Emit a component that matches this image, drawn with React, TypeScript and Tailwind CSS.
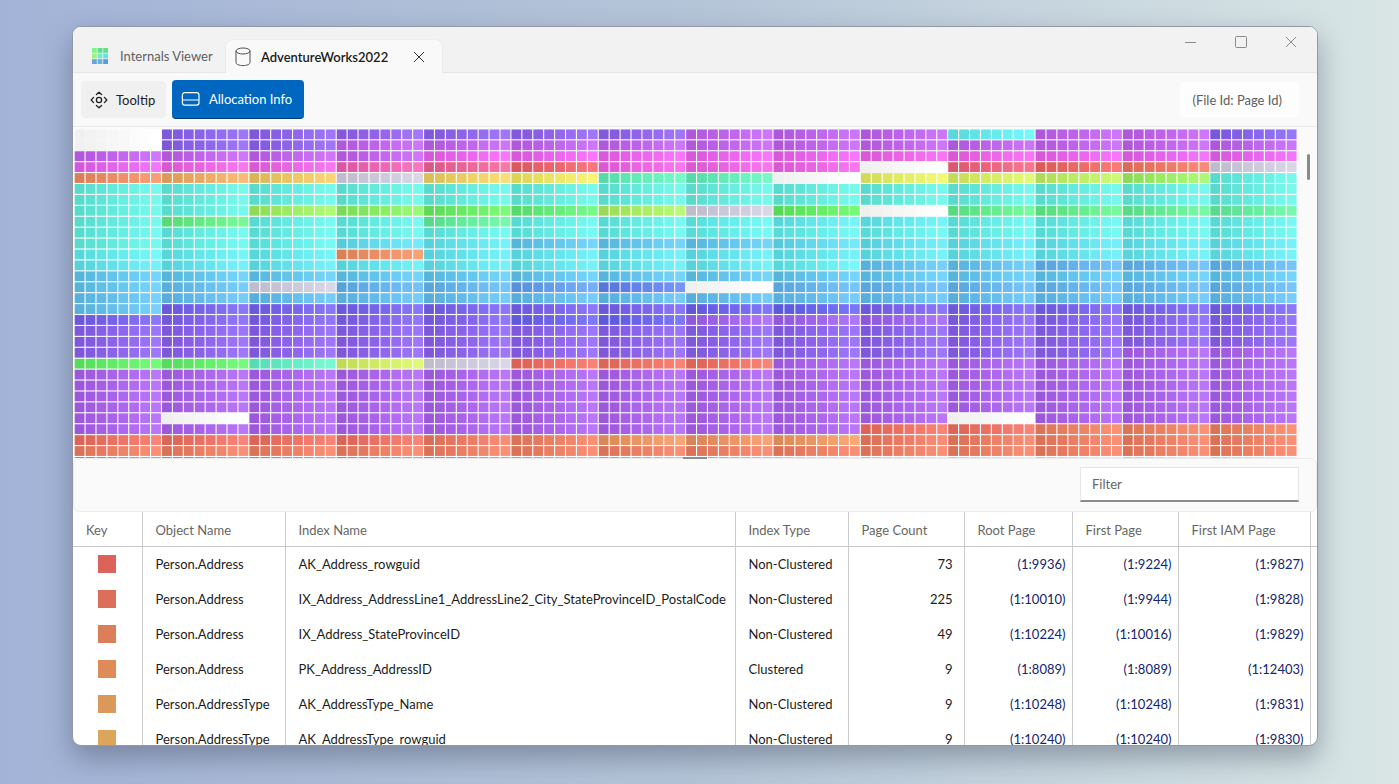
import React from 'react';

// Hue of each extent, or one of the two special fills
const W = -1; // unallocated
const G = -2; // system pages

const fill = (value: number, count = 14): number[] => Array(count).fill(value);

const EXTENTS: number[][] = [
  [W, 257, 258, 261, 259, 260, 260, 280, 279, 279, 181, 280, 280, 255],
  [W, 258, 259, 280, 280, 280, 280, 280, 280, 280, 279, 280, 280, 279],
  [281, 281, 281, 281, 299, 299, 300, 299, 299, 303, 303, 299, 297, 297],
  [297, 305, 304, 326, 338, 356, 304, 304, 303, W, 349, 2, 9, G],
  [18, 31, 43, G, 47, 57, 157, 157, W, 64, 70, 80, 95, 174],
  fill(174),
  fill(174),
  [174, 174, 94, 104, 117, 129, 89, G, 120, W, 139, 138, 142, 146],
  [174, 134, 176, 176, 145, 177, 177, 180, 182, 182, 177, 177, 177, 177],
  [175, 176, 176, 176, 177, 177, 177, 178, 178, 178, 177, 177, 177, 177],
  [174, 176, 178, 187, 184, 197, 197, 197, 188, 186, 185, 185, 184, 184],
  [181, 182, 182, 19, 184, 184, 184, 184, 184, 184, 184, 184, 183, 183],
  [184, 184, 184, 184, 184, 184, 184, 184, 181, 199, 199, 205, 204, 204],
  fill(197),
  [197, 200, G, 206, 204, 214, 226, W, 204, 204, 204, 204, 204, 204],
  [199, ...fill(201, 13)],
  [199, 249, 249, 249, 250, 250, 249, 244, 242, 250, 250, 250, 250, 250],
  [249, 253, 253, 253, 253, 244, 243, 267, 266, 264, 255, 254, 254, 254],
  fill(257),
  fill(258),
  [...fill(258, 12), 271, 271],
  [122, 123, 162, 72, G, 5, 6, 6, ...fill(271, 6)],
  fill(271),
  fill(271),
  fill(271),
  fill(271),
  [271, W, ...fill(271, 8), W, ...fill(271, 3)],
  [...fill(271, 9), 6, 6, 13, 13, 13],
  [6, 6, 6, 6, 10, 12, 22, 20, 23, 10, 11, 12, 12, 12],
  fill(12),
  [12, 12, 12, 12, 14, 30, 30, 30, 55, 55, 62, 62, 62, 62],
];

const PAGES = [0, 1, 2, 3, 4, 5, 6, 7];

// Pages get lighter from left to right inside an extent
const pageColour = (hue: number, page: number) => {
  const t = page / 7;
  if (hue === W) return `hsl(0 0% ${94 + 6 * t}%)`;
  if (hue === G) return `hsl(250 ${14 + 10 * t}% ${77 + 10 * t}%)`;
  return `hsl(${hue} ${64 + 28 * t}% ${60 + 12 * t}%)`;
};

const AllocationMap: React.FC = () => (
  <svg viewBox="0 0 112 30.1" className="block w-full" role="img" aria-label="Allocation map">
    <rect width="112" height="30.1" fill="#fff" />
    {EXTENTS.map((row, y) =>
      row.map((hue, x) =>
        PAGES.map((page) => (
          <rect
            key={`${y}-${x}-${page}`}
            x={x * 8 + page + 0.06}
            y={y + 0.04}
            width={hue === W ? 1 : 0.9}
            height={hue === W ? 1 : 0.9}
            fill={pageColour(hue, page)}
          />
        )),
      ),
    )}
  </svg>
);

interface IndexRow {
  colour: string;
  object: string;
  index: string;
  type: string;
  pages: number;
  root: string;
  first: string;
  iam: string;
}

const ROWS: IndexRow[] = [
  { colour: '#dd6259', object: 'Person.Address', index: 'AK_Address_rowguid', type: 'Non-Clustered', pages: 73, root: '(1:9936)', first: '(1:9224)', iam: '(1:9827)' },
  { colour: '#dc6f5a', object: 'Person.Address', index: 'IX_Address_AddressLine1_AddressLine2_City_StateProvinceID_PostalCode', type: 'Non-Clustered', pages: 225, root: '(1:10010)', first: '(1:9944)', iam: '(1:9828)' },
  { colour: '#dd7e5b', object: 'Person.Address', index: 'IX_Address_StateProvinceID', type: 'Non-Clustered', pages: 49, root: '(1:10224)', first: '(1:10016)', iam: '(1:9829)' },
  { colour: '#dc8b59', object: 'Person.Address', index: 'PK_Address_AddressID', type: 'Clustered', pages: 9, root: '(1:8089)', first: '(1:8089)', iam: '(1:12403)' },
  { colour: '#db985b', object: 'Person.AddressType', index: 'AK_AddressType_Name', type: 'Non-Clustered', pages: 9, root: '(1:10248)', first: '(1:10248)', iam: '(1:9831)' },
  { colour: '#dba659', object: 'Person.AddressType', index: 'AK_AddressType_rowguid', type: 'Non-Clustered', pages: 9, root: '(1:10240)', first: '(1:10240)', iam: '(1:9830)' },
];

const COLUMNS = ['Key', 'Object Name', 'Index Name', 'Index Type', 'Page Count', 'Root Page', 'First Page', 'First IAM Page'];

const LOGO = ['#7df58c', '#5fdc8c', '#5fe08c', '#a0f27a', '#6fe8d8', '#66e2e0', '#62a8dc', '#62b4e2', '#5c9cd6'];

const LogoIcon = () => (
  <svg width="16" height="16" viewBox="0 0 16 16" aria-hidden="true">
    {LOGO.map((colour, i) => (
      <rect key={i} x={(i % 3) * 5.6} y={Math.floor(i / 3) * 5.6} width="4.8" height="4.8" fill={colour} />
    ))}
  </svg>
);

const DatabaseIcon = () => (
  <svg width="16" height="20" viewBox="0 0 16 20" fill="none" stroke="#505050" aria-hidden="true">
    <ellipse cx="8" cy="4" rx="7" ry="3" />
    <path d="M1 4v11.6c0 1.6 3.1 3 7 3s7-1.4 7-3V4" />
  </svg>
);

const TooltipIcon = () => (
  <svg width="18" height="18" viewBox="0 0 18 18" fill="none" stroke="#202020" strokeWidth="1.3" strokeLinecap="round" strokeLinejoin="round" aria-hidden="true">
    <circle cx="9" cy="9" r="2.6" />
    <path d="M6.4 3.6 9 1.2l2.6 2.4M6.4 14.4 9 16.8l2.6-2.4M3.6 6.4 1.2 9l2.4 2.6M14.4 6.4 16.8 9l-2.4 2.6" />
  </svg>
);

const PanelIcon = () => (
  <svg width="20" height="16" viewBox="0 0 20 16" fill="none" stroke="#fff" strokeWidth="1.2" aria-hidden="true">
    <rect x="1.4" y="1.6" width="16.6" height="12.6" rx="2.4" />
    <path d="M1.4 9h16.6" />
  </svg>
);

const CrossIcon = ({ className }: { className: string }) => (
  <svg width="12" height="12" viewBox="0 0 12 12" fill="none" stroke="currentColor" className={className} aria-hidden="true">
    <path d="M1 1l10 10M11 1 1 11" />
  </svg>
);

const TitleBar: React.FC = () => (
  <header className="flex h-[46px] shrink-0 justify-between border-b border-[#e6e6e6] bg-[#f2f2f2]">
    <div className="flex items-end" role="tablist">
      <button role="tab" aria-selected="false" className="flex h-[33px] w-[152px] items-center gap-3 pl-[19px] text-[#5f5f5f]">
        <LogoIcon />
        Internals Viewer
      </button>
      {/* Active tab covers the bar's bottom border */}
      <div className="-mb-px flex h-[34px] w-[218px] items-center justify-between rounded-t-lg border border-b-0 border-[#ececec] bg-[#f9f9f9] pr-[17px] pl-[9px]">
        <button role="tab" aria-selected="true" className="flex items-center gap-[10px] font-semibold text-[#1a1a1a]">
          <DatabaseIcon />
          AdventureWorks2022
        </button>
        <button aria-label="Close tab" className="text-[#303030]">
          <CrossIcon className="block" />
        </button>
      </div>
    </div>
    <div className="flex h-[30px] items-center gap-[38px] pr-5 text-[#8a8a8a]">
      <button aria-label="Minimize">
        <svg width="12" height="12" viewBox="0 0 12 12" stroke="currentColor" className="block">
          <path d="M0 6.5h11" />
        </svg>
      </button>
      <button aria-label="Maximize">
        <svg width="12" height="12" viewBox="0 0 12 12" fill="none" stroke="currentColor" className="block">
          <rect x="0.5" y="0.5" width="11" height="11" rx="1" />
        </svg>
      </button>
      <button aria-label="Close">
        <CrossIcon className="block" />
      </button>
    </div>
  </header>
);

const Toolbar: React.FC = () => (
  <div className="flex h-[54px] shrink-0 items-center justify-between border-b border-[#ebebeb] bg-[#f9f9f9] pr-[18px] pl-2">
    <div className="flex items-center gap-[6px]">
      <button className="flex h-[37px] w-[85px] items-center gap-2 rounded bg-[#f0f0f0] pl-[9px] text-[#202020]">
        <TooltipIcon />
        Tooltip
      </button>
      <button className="flex h-[39px] w-[132px] items-center gap-2 rounded border-b border-[#003e73] bg-[#0067c0] pl-[9px] whitespace-nowrap text-white">
        <PanelIcon />
        Allocation Info
      </button>
    </div>
    <button className="h-[35px] rounded bg-[#fdfdfd] pr-[17px] pl-3 text-[#606060]">(File Id: Page Id)</button>
  </div>
);

const IndexTable: React.FC = () => (
  <table className="w-full table-fixed border-collapse">
    <colgroup>
      <col className="w-[69px]" />
      <col className="w-[143px]" />
      <col />
      <col className="w-[113px]" />
      <col className="w-[116px]" />
      <col className="w-[108px]" />
      <col className="w-[106px]" />
      <col className="w-[132px]" />
      <col className="w-[7px]" />
    </colgroup>
    <thead>
      <tr className="h-[35px] border-b border-[#c8c8c8] text-left text-[#666666]">
        {COLUMNS.map((column) => (
          <th key={column} scope="col" className="border-r border-[#cccccc] pt-[2px] pl-[13px] font-normal">
            {column}
          </th>
        ))}
        <td />
      </tr>
    </thead>
    <tbody>
      {ROWS.map((row) => (
        <tr key={row.index} className="h-[35px] text-[#1c1c1c] [&>td]:border-[#cccccc]">
          <td className="border-r">
            <div className="mx-auto h-[18px] w-[18px]" style={{ backgroundColor: row.colour }} />
          </td>
          <td className="border-r pl-[13px]">{row.object}</td>
          <td className="border-r pl-[13px] whitespace-nowrap">{row.index}</td>
          <td className="border-r pl-[13px]">{row.type}</td>
          <td className="border-r pr-[11px] text-right">{row.pages}</td>
          <td className="border-r pr-[6px] text-right"><a href="#root" className="text-[#14246e]">{row.root}</a></td>
          <td className="border-r pr-[6px] text-right"><a href="#first" className="text-[#14246e]">{row.first}</a></td>
          <td className="border-r pr-[6px] text-right"><a href="#iam" className="text-[#14246e]">{row.iam}</a></td>
          <td />
        </tr>
      ))}
    </tbody>
  </table>
);

export default function App() {
  return (
    <div className="flex h-screen bg-linear-to-r from-[#a3b3d7] via-[#b5c5d8] to-[#d9e6e5] pt-[26px] pr-[81px] pb-[38px] pl-[72px] font-[Lato,'Open_Sans',sans-serif] text-[13px] leading-5">
      <main className="flex min-w-0 flex-1 flex-col overflow-hidden rounded-[9px] border border-[#9299a3] bg-white shadow-[0_12px_28px_rgba(50,60,80,0.4)]">
        <TitleBar />
        <Toolbar />

        <section className="flex shrink-0 gap-[10px] bg-[#fafafa] pt-[2px] pr-[6px] pl-px">
          <div className="min-w-0 flex-1">
            <AllocationMap />
          </div>
          {/* Scroll thumb */}
          <div className="mt-[25px] mr-px h-[26px] w-[3px] rounded-full bg-[#8a8a8a]" />
        </section>

        <section className="relative flex h-[54px] shrink-0 items-center justify-end rounded-md border border-[#ebebeb] bg-[#fafafa] pr-[17px]">
          {/* Splitter grip */}
          <div className="absolute -top-[2px] left-1/2 h-[2px] w-6 -translate-x-1/2 bg-[#8c8c8c]" />
          <input
            type="text"
            aria-label="Filter"
            placeholder="Filter"
            className="h-[35px] w-[219px] border border-b-2 border-[#e6e6e6] border-b-[#8c8c8c] bg-white px-[11px] outline-none placeholder:text-[#666666]"
          />
        </section>

        <div className="min-h-0 flex-1 overflow-hidden">
          <IndexTable />
        </div>
      </main>
    </div>
  );
}
